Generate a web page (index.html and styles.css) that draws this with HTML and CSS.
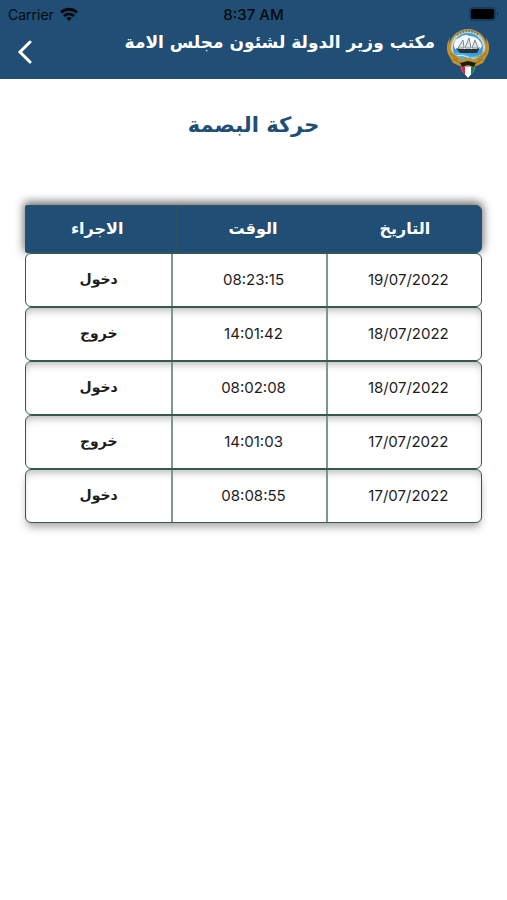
FILE: index.html
```html
<!DOCTYPE html>
<html lang="ar" dir="rtl">

<head>
    <meta charset="UTF-8">
    <meta name="viewport" content="width=device-width, initial-scale=1.0">
    <title>حركة البصمة</title>
    <link rel="stylesheet" href="styles.css">
</head>

<body>
    <header class="header">
        <div class="status-bar" dir="ltr">
            <span class="carrier">Carrier
                <svg class="wifi" viewBox="0 0 18 14" fill="none" stroke="#05090d" stroke-width="3">
                    <path d="M1 5.5C5.5 1 12.5 1 17 5.5" />
                    <path d="M4 9C7 6.2 11 6.2 14 9" />
                    <path d="M9 14L6.3 11.2Q9 9 11.7 11.2Z" fill="#05090d" stroke="none" />
                </svg>
            </span>
            <span class="clock">8:37 AM</span>
            <span class="power">
                <svg class="battery" viewBox="0 0 30 14">
                    <rect width="27" height="14" rx="4" fill="#173d5c" />
                    <rect x="2" y="2" width="23" height="10" rx="2" fill="#000" />
                    <path d="M28 5Q30 7 28 9Z" fill="#10283c" />
                </svg>
            </span>
        </div>
        <div class="nav">
            <svg class="logo" viewBox="0 0 44 50">
                <path d="M14 34H30L28 43L22 50L16 43Z" fill="#fff" />
                <path d="M14 34H19V47L16 43Z" fill="#e0263c" />
                <path d="M25 34H30L28 43L25 47Z" fill="#168447" />
                <circle cx="22" cy="20" r="19" fill="#b99a55" />
                <circle cx="22" cy="20" r="17" fill="#d9d5bd" />
                <circle cx="22" cy="20" r="15" fill="#3d9bd8" />
                <path d="M8 18Q8 11 13 10Q18 5 24 8Q33 8 36 18L34 21H9Z" fill="#f5f8fa" />
                <path d="M11 7Q22 -1 33 7" fill="none" stroke="#77786c" stroke-width="2" stroke-dasharray="2 1" />
                <path d="M12 20L17 12L18 20ZM19 20L23 10L25 20ZM26 20L29 12L32 20Z" fill="#dfe5e8" stroke="#7d8a92" stroke-width="1" />
                <path d="M10 20L14 21H31L34 19L31 25H14Z" fill="#26333d" />
                <path d="M8 25Q15 24 22 27T36 25Q33 35 22 36Q11 35 8 25Z" fill="#54b4df" />
                <path d="M10 28Q16 26 22 29T34 28" fill="none" stroke="#d3edf5" stroke-width="1" />
                <path d="M4 9Q-1 18 2 26L7 35L16 39L22 37L28 39L37 35L42 26Q45 18 40 9Q42 20 36 26L27 32L24 29L22 31L20 29L17 32L8 26Q2 20 4 9Z" fill="#c0912e" />
                <path d="M4 25L12 32M7 31L16 36M40 25L32 32M37 31L28 36" stroke="#8a6c2c" stroke-width="1" />
                <path d="M14 35L22 33L30 35L28 39L22 37L16 39Z" fill="#1d1c19" />
            </svg>
            <h1 class="office">مكتب وزير الدولة لشئون مجلس الامة</h1>
            <button type="button" class="back" aria-label="رجوع">
                <svg viewBox="0 0 16 24" fill="none" stroke="#fff" stroke-width="3" stroke-linecap="round">
                    <path d="M13 2L3 12L13 22" />
                </svg>
            </button>
        </div>
    </header>

    <main>
        <h2 class="page-title">حركة البصمة</h2>
        <table class="moves">
            <thead>
                <tr>
                    <th scope="col">التاريخ</th>
                    <th scope="col">الوقت</th>
                    <th scope="col">الاجراء</th>
                </tr>
            </thead>
            <tbody>
                <tr>
                    <td>19/07/2022</td>
                    <td>08:23:15</td>
                    <td class="action">دخول</td>
                </tr>
                <tr>
                    <td>18/07/2022</td>
                    <td>14:01:42</td>
                    <td class="action">خروج</td>
                </tr>
                <tr>
                    <td>18/07/2022</td>
                    <td>08:02:08</td>
                    <td class="action">دخول</td>
                </tr>
                <tr>
                    <td>17/07/2022</td>
                    <td>14:01:03</td>
                    <td class="action">خروج</td>
                </tr>
                <tr>
                    <td>17/07/2022</td>
                    <td>08:08:55</td>
                    <td class="action">دخول</td>
                </tr>
            </tbody>
        </table>
    </main>
</body>

</html>
```
FILE: styles.css
```css
* {
    box-sizing: border-box;
}

body {
    margin: 0;
    background: #fff;
    color: #1c1c1c;
    font-family: Inter, "DejaVu Sans", sans-serif;
}

.header {
    height: 79px;
    background: #204e75;
}

.status-bar {
    display: grid;
    grid-template-columns: 1fr auto 1fr;
    align-items: center;
    height: 28px;
    padding: 0 8px;
    font-size: 14px;
    color: #05090d;
}

.carrier {
    display: flex;
    align-items: center;
    gap: 6px;
}

.wifi {
    width: 18px;
    height: 14px;
}

.clock {
    font-size: 15px;
    font-weight: 500;
}

.power {
    display: flex;
    justify-content: flex-end;
}

.battery {
    width: 30px;
    height: 14px;
}

.nav {
    display: flex;
    align-items: flex-start;
    padding: 0 17px;
}

.logo {
    width: 44px;
    height: 50px;
}

.office {
    flex: 1;
    margin: 0 11px;
    font-family: "DejaVu Sans", sans-serif;
    font-size: 17px;
    line-height: 28px;
    color: #fff;
    white-space: nowrap;
}

.back {
    width: 16px;
    height: 24px;
    margin-top: 12px;
    padding: 0;
    border: none;
    background: none;
    cursor: pointer;
}

.back svg {
    display: block;
}

main {
    padding: 28px 25px;
}

.page-title {
    margin: 0 0 62px;
    font-family: "DejaVu Sans", sans-serif;
    font-size: 21px;
    line-height: 36px;
    text-align: center;
    color: #204e75;
}

.moves,
.moves thead,
.moves tbody {
    display: block;
}

.moves tr {
    display: grid;
    grid-template-columns: 156fr 155fr 146fr;
    height: 54px;
    border: 1px solid #36594f;
    border-radius: 6px;
    background: #fff;
}

/* shadow of each row falls on the row below it */
.moves tbody tr {
    box-shadow: inset 0 6px 8px -4px rgba(0, 0, 0, 0.3);
}

.moves tbody tr:first-child {
    box-shadow: none;
}

.moves tbody tr:last-child {
    box-shadow: inset 0 6px 8px -4px rgba(0, 0, 0, 0.3), 0 6px 8px -2px rgba(0, 0, 0, 0.35);
}

.moves thead tr {
    grid-template-columns: 153fr 152fr 152fr;
    height: 48px;
    border-color: #2c5360;
    border-radius: 2px 6px 6px 2px;
    background: #204e75;
    box-shadow: 0 -2px 10px 1px rgba(0, 0, 0, 0.6);
}

.moves th,
.moves td {
    display: flex;
    align-items: center;
    justify-content: center;
    padding: 0 0 2px;
}

.moves th {
    font-family: "DejaVu Sans", sans-serif;
    font-size: 16px;
    color: #fff;
}

.moves th:last-child {
    padding-right: 8px;
    border-right: 1px solid #2c5360;
}

.moves td {
    padding-left: 8px;
    border-left: 2px solid #7d968f;
    font-size: 15px;
}

.moves td:last-child {
    padding-left: 0;
    border-left: none;
}

.moves .action {
    font-family: "DejaVu Sans", sans-serif;
    font-size: 14px;
    font-weight: bold;
}
```
